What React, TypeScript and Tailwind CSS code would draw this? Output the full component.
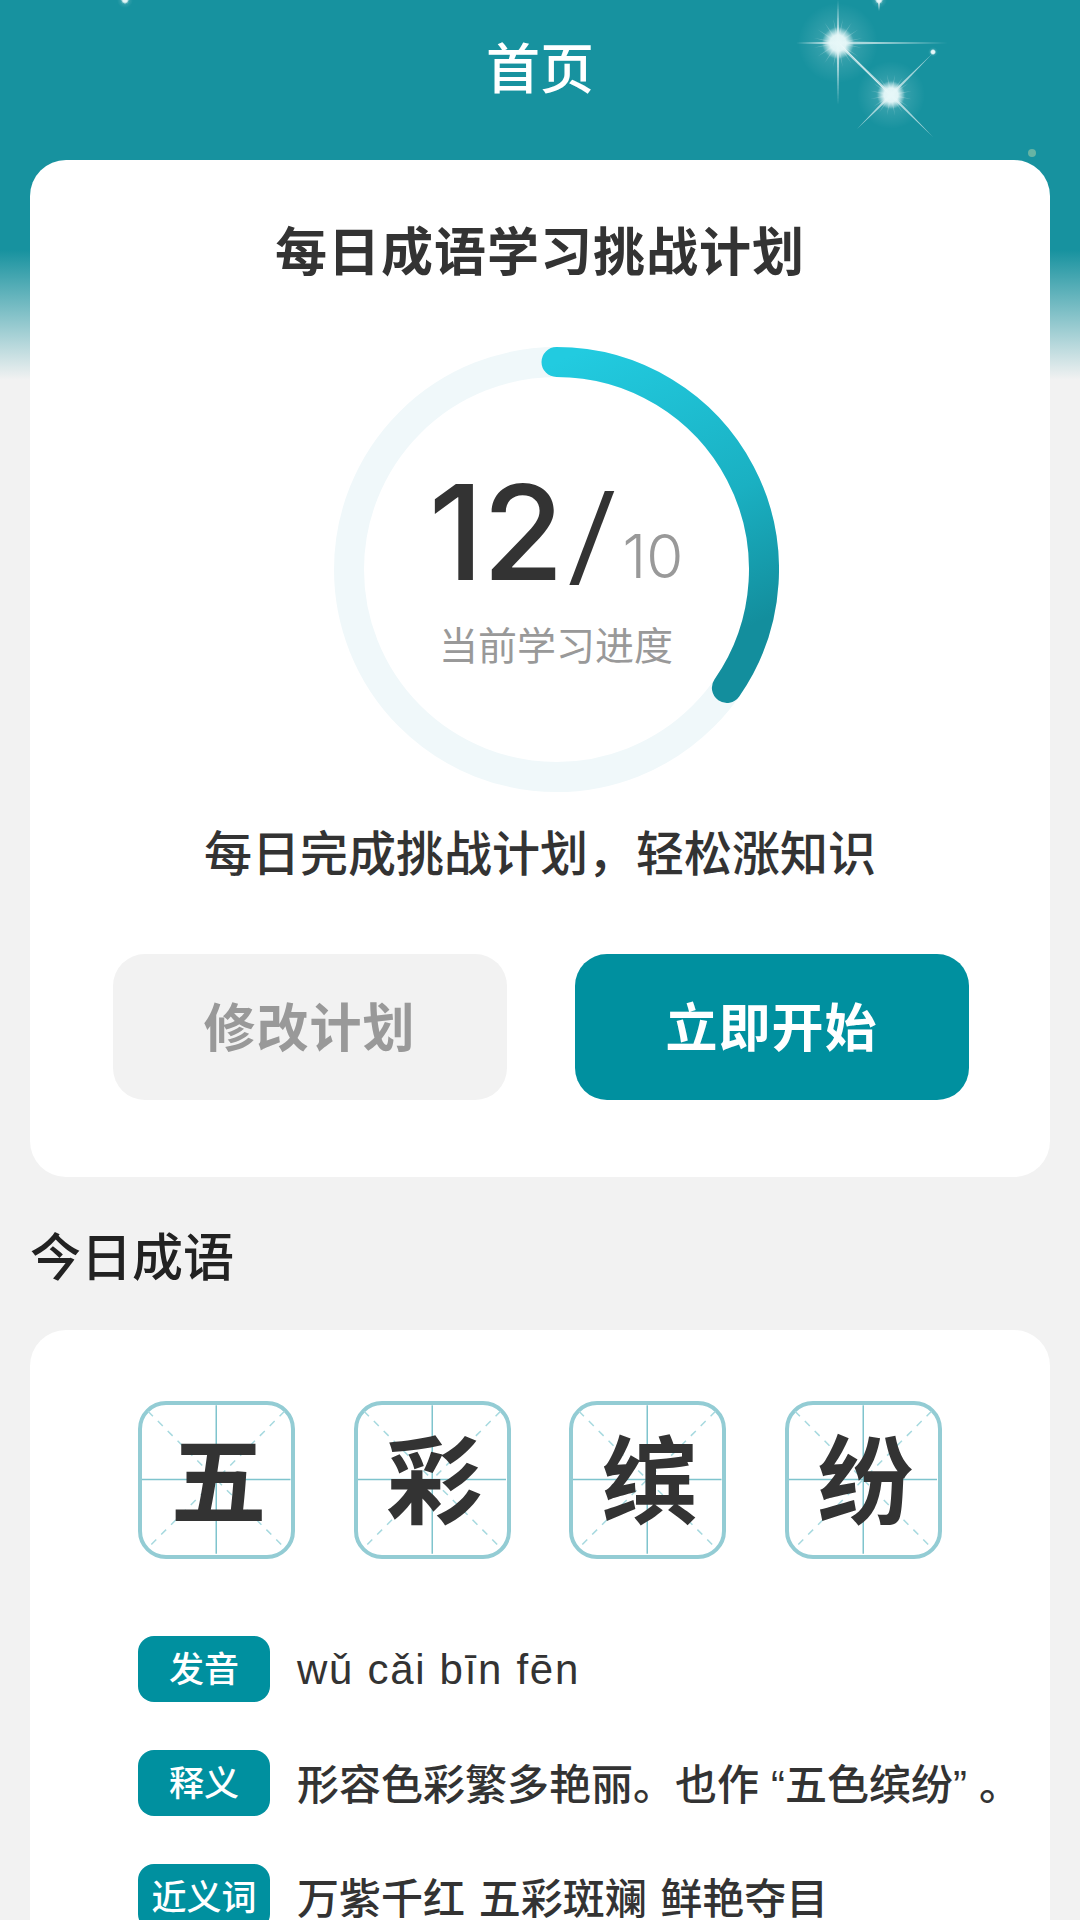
import type { ReactNode } from "react";

const CJK = "font-['Liberation_Sans','Noto_Sans_CJK_SC',sans-serif]";

// tapered light ray, wide at the star and fading to a point
function Ray({ x, y, dx, dy, w = 3, o = 0.6 }: { x: number; y: number; dx: number; dy: number; w?: number; o?: number }) {
  const len = Math.hypot(dx, dy) || 1;
  const nx = (-dy / len) * (w / 2);
  const ny = (dx / len) * (w / 2);
  return (
    <polygon
      points={`${x + nx},${y + ny} ${x + dx},${y + dy} ${x - nx},${y - ny}`}
      fill="#ffffff"
      fillOpacity={o}
    />
  );
}

function Sparkle({ x, y, r, rays, core }: { x: number; y: number; r: number; rays: [number, number][]; core: number }) {
  const spikes = Array.from({ length: 16 }, (_, i) => (i * Math.PI) / 8 + 0.2);
  return (
    <g>
      <circle cx={x} cy={y} r={r} fill="url(#glow)" />
      {spikes.map((a, i) => (
        <Ray key={i} x={x} y={y} dx={Math.cos(a) * r * 0.62} dy={Math.sin(a) * r * 0.62} w={2.5} o={0.22} />
      ))}
      {rays.map(([dx, dy], i) => (
        <Ray key={i} x={x} y={y} dx={dx} dy={dy} />
      ))}
      <circle cx={x} cy={y} r={core * 2} fill="url(#core)" />
    </g>
  );
}

function Stars() {
  return (
    <svg className="absolute left-0 top-0" width="1080" height="180" viewBox="0 0 1080 180">
      <defs>
        <radialGradient id="glow">
          <stop offset="0%" stopColor="#ffffff" stopOpacity="0.45" />
          <stop offset="45%" stopColor="#ffffff" stopOpacity="0.12" />
          <stop offset="100%" stopColor="#ffffff" stopOpacity="0" />
        </radialGradient>
        <radialGradient id="core">
          <stop offset="0%" stopColor="#e6f7f8" />
          <stop offset="50%" stopColor="#e6f7f8" stopOpacity="0.95" />
          <stop offset="100%" stopColor="#e6f7f8" stopOpacity="0" />
        </radialGradient>
      </defs>
      <Sparkle x={838} y={43} r={40} core={8} rays={[[0, -43], [0, 62], [-42, 0], [110, 0], [54, 54]]} />
      <Sparkle x={891} y={95} r={34} core={7} rays={[[-34, 34], [42, 42], [42, -42], [-54, -54]]} />
      <Sparkle x={933} y={52} r={5} core={1.5} rays={[]} />
      <Sparkle x={879} y={0} r={8} core={2} rays={[[0, 11]]} />
      <Sparkle x={125} y={0} r={8} core={2} rays={[]} />
      <circle cx={1032} cy={153} r={4} fill="#a9cfa8" fillOpacity="0.55" />
    </svg>
  );
}

function ProgressRing() {
  return (
    <div className="relative h-[445px] w-[445px]">
      <svg className="absolute inset-0" width="445" height="445" viewBox="0 0 445 445">
        <defs>
          <linearGradient id="arc" x1="0" y1="0" x2="0.3" y2="1">
            <stop offset="0%" stopColor="#22cbe0" />
            <stop offset="60%" stopColor="#1ab0c2" />
            <stop offset="100%" stopColor="#138e9d" />
          </linearGradient>
        </defs>
        <circle cx="222.5" cy="222.5" r="207.5" fill="none" stroke="#f0f8fa" strokeWidth="30" />
        <path
          d="M 222.5 15 A 207.5 207.5 0 0 1 392.9 340.9"
          fill="none"
          stroke="url(#arc)"
          strokeWidth="30"
          strokeLinecap="round"
        />
      </svg>
      <div className="absolute inset-0 flex flex-col items-center pt-[119px]">
        <div className="flex items-baseline font-['Inter',sans-serif] leading-none">
          <span className="text-[132px] font-medium tracking-[-1px] text-[#333333]">12</span>
          <span className="ml-[10px] -translate-y-[7px] scale-x-[1.4] text-[108px] font-light text-[#333333]">/</span>
          <span className="ml-[12px] -translate-y-[2px] text-[60px] font-light text-[#999999]">10</span>
        </div>
        <div className={`mt-[23px] text-[39px] leading-[52px] text-[#999999] ${CJK}`}>当前学习进度</div>
      </div>
    </div>
  );
}

function GridChar({ char }: { char: string }) {
  return (
    <div className="relative flex h-[158px] w-[157.5px] items-center justify-center rounded-[28px] border-[4.5px] border-[#93ccd4] pl-[4px] pt-[5px]">
      <svg className="absolute inset-0" width="148.5" height="149" viewBox="0 0 149 149">
        <line x1="74.5" y1="0" x2="74.5" y2="149" stroke="#7fc4cd" strokeWidth="1.5" />
        <line x1="0" y1="74.5" x2="149" y2="74.5" stroke="#7fc4cd" strokeWidth="1.5" />
        <line x1="6" y1="6" x2="143" y2="143" stroke="#a6d9df" strokeWidth="1.5" strokeDasharray="7 7" />
        <line x1="143" y1="6" x2="6" y2="143" stroke="#a6d9df" strokeWidth="1.5" strokeDasharray="7 7" />
      </svg>
      <span className={`relative text-[96px] font-bold leading-none text-[#333333] ${CJK}`}>{char}</span>
    </div>
  );
}

function InfoRow({ label, className, children }: { label: string; className: string; children: ReactNode }) {
  return (
    <div className="flex items-center">
      <div className="flex h-[66px] w-[132px] shrink-0 items-center justify-center rounded-[16px] bg-[#00909f] text-[35px] font-medium leading-none text-white">
        {label}
      </div>
      <div className={`ml-[27px] whitespace-nowrap text-[42px] font-medium leading-none text-[#333333] ${className}`}>
        {children}
      </div>
    </div>
  );
}

export default function App() {
  const chars = ["五", "彩", "缤", "纷"];

  return (
    <div
      className={`h-[1920px] w-[1080px] overflow-hidden bg-[#f2f2f2] bg-[linear-gradient(#17929f_0,#17929f_250px,#f2f2f2_380px)] ${CJK}`}
    >
      <header className="relative flex h-[160px] items-center justify-center pb-[20px]">
        <Stars />
        <h1 className="relative text-[54px] font-medium leading-none text-white">首页</h1>
      </header>

      <main className="flex flex-col px-[30px]">
        <section className="flex h-[1017px] flex-col items-center rounded-[36px] bg-white pt-[64px]">
          <h2 className="text-[52px] font-bold leading-[58px] tracking-[1px] text-[#333333]">每日成语学习挑战计划</h2>
          <div className="ml-[32px] mt-[65px]">
            <ProgressRing />
          </div>
          <p className="mt-[33px] text-[48px] font-medium leading-[60px] text-[#333333]">每日完成挑战计划，轻松涨知识</p>
          <div className="ml-[1px] mt-[69px] flex gap-[68px]">
            <button className="h-[146px] w-[394px] rounded-[32px] bg-[#f2f2f2] pt-[3px] text-[52px] font-bold tracking-[1px] text-[#999999]">
              修改计划
            </button>
            <button className="h-[146px] w-[394px] rounded-[32px] bg-[#00909f] pt-[3px] text-[52px] font-bold tracking-[1px] text-white">
              立即开始
            </button>
          </div>
        </section>

        <h3 className="mt-[52px] text-[51px] font-medium leading-[60px] text-[#222222]">今日成语</h3>

        <section className="mt-[41px] h-[700px] rounded-[36px] bg-white px-[108px] pt-[71px]">
          <div className="flex gap-[58.5px]">
            {chars.map((c) => (
              <GridChar key={c} char={c} />
            ))}
          </div>
          <div className="mt-[77px] flex flex-col gap-[48px]">
            <InfoRow label="发音" className="pt-[2px] tracking-[1.7px]">
              wǔ cǎi bīn fēn
            </InfoRow>
            <InfoRow label="释义" className="pt-[6px]">
              形容色彩繁多艳丽。也作<span className="pl-[12px]">“</span>五色缤纷<span className="pr-[12px]">”</span>。
            </InfoRow>
            <InfoRow label="近义词" className="pt-[6px] [word-spacing:2px]">
              万紫千红 五彩斑斓 鲜艳夺目
            </InfoRow>
          </div>
        </section>
      </main>
    </div>
  );
}
